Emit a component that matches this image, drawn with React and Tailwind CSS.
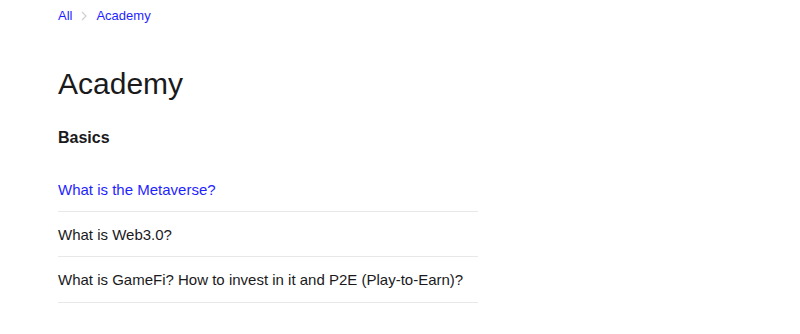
export default function App() {
  const items = [
    { text: "What is the Metaverse?", active: true },
    { text: "What is Web3.0?" },
    { text: "What is GameFi? How to invest in it and P2E (Play-to-Earn)?" },
  ];
  return (
    <div className="min-h-[334px] bg-white pl-[58px] font-['Liberation_Sans',Arial,sans-serif] text-[#1a1a1c]">
      <nav className="flex items-center pt-[7px] text-[13px] leading-[18px] text-[#1f1fff]">
        <span>All</span>
        <svg className="mx-[8px]" width="8" height="12" viewBox="0 0 8 12" fill="none">
          <path d="M2 2l4 4-4 4" stroke="#cfcfcf" strokeWidth="1.2" />
        </svg>
        <span>Academy</span>
      </nav>
      <h1 className="mt-[41px] text-[30px] leading-[36px] font-normal">Academy</h1>
      <h2 className="mt-[24px] text-[16px] leading-[24px] font-bold">Basics</h2>
      <ul className="mt-[17px] w-[420px]">
        {items.map((it, i) => (
          <li
            key={it.text}
            className={`border-b border-[#e8e8e8] pt-[12px] ${i === 2 ? "pb-[11px]" : "pb-[10px]"} text-[15px] leading-[22px] ${it.active ? "text-[#1f1fff]" : "text-[#1a1a1c]"}`}
          >
            {it.text}
          </li>
        ))}
      </ul>
    </div>
  );
}
